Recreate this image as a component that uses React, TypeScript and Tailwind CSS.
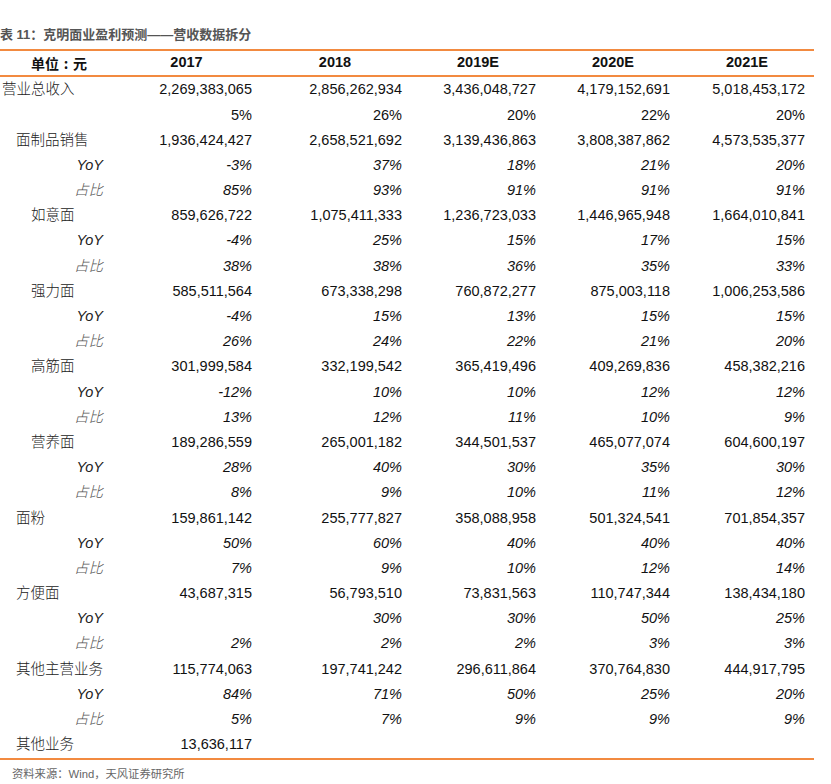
import React from "react";

type Row = { label: string; level: 0 | 1 | 2 | "yoy" | "zb" | "blank"; vals: string[] };

const rows: Row[] = [
  { label: "营业总收入", level: 0, vals: ["2,269,383,065", "2,856,262,934", "3,436,048,727", "4,179,152,691", "5,018,453,172"] },
  { label: "", level: "blank", vals: ["5%", "26%", "20%", "22%", "20%"] },
  { label: "面制品销售", level: 1, vals: ["1,936,424,427", "2,658,521,692", "3,139,436,863", "3,808,387,862", "4,573,535,377"] },
  { label: "YoY", level: "yoy", vals: ["-3%", "37%", "18%", "21%", "20%"] },
  { label: "占比", level: "zb", vals: ["85%", "93%", "91%", "91%", "91%"] },
  { label: "如意面", level: 2, vals: ["859,626,722", "1,075,411,333", "1,236,723,033", "1,446,965,948", "1,664,010,841"] },
  { label: "YoY", level: "yoy", vals: ["-4%", "25%", "15%", "17%", "15%"] },
  { label: "占比", level: "zb", vals: ["38%", "38%", "36%", "35%", "33%"] },
  { label: "强力面", level: 2, vals: ["585,511,564", "673,338,298", "760,872,277", "875,003,118", "1,006,253,586"] },
  { label: "YoY", level: "yoy", vals: ["-4%", "15%", "13%", "15%", "15%"] },
  { label: "占比", level: "zb", vals: ["26%", "24%", "22%", "21%", "20%"] },
  { label: "高筋面", level: 2, vals: ["301,999,584", "332,199,542", "365,419,496", "409,269,836", "458,382,216"] },
  { label: "YoY", level: "yoy", vals: ["-12%", "10%", "10%", "12%", "12%"] },
  { label: "占比", level: "zb", vals: ["13%", "12%", "11%", "10%", "9%"] },
  { label: "营养面", level: 2, vals: ["189,286,559", "265,001,182", "344,501,537", "465,077,074", "604,600,197"] },
  { label: "YoY", level: "yoy", vals: ["28%", "40%", "30%", "35%", "30%"] },
  { label: "占比", level: "zb", vals: ["8%", "9%", "10%", "11%", "12%"] },
  { label: "面粉", level: 1, vals: ["159,861,142", "255,777,827", "358,088,958", "501,324,541", "701,854,357"] },
  { label: "YoY", level: "yoy", vals: ["50%", "60%", "40%", "40%", "40%"] },
  { label: "占比", level: "zb", vals: ["7%", "9%", "10%", "12%", "14%"] },
  { label: "方便面", level: 1, vals: ["43,687,315", "56,793,510", "73,831,563", "110,747,344", "138,434,180"] },
  { label: "YoY", level: "yoy", vals: ["", "30%", "30%", "50%", "25%"] },
  { label: "占比", level: "zb", vals: ["2%", "2%", "2%", "3%", "3%"] },
  { label: "其他主营业务", level: 1, vals: ["115,774,063", "197,741,242", "296,611,864", "370,764,830", "444,917,795"] },
  { label: "YoY", level: "yoy", vals: ["84%", "71%", "50%", "25%", "20%"] },
  { label: "占比", level: "zb", vals: ["5%", "7%", "9%", "9%", "9%"] },
  { label: "其他业务", level: 1, vals: ["13,636,117", "", "", "", ""] },
];

const cols = "grid grid-cols-[113px_147px_150px_136px_134px_134px]";
const padR = ["pr-[8px]", "pr-[8px]", "pr-[10px]", "pr-[10px]", "pr-[9px]"];

function Label({ r }: { r: Row }) {
  if (r.level === "yoy")
    return <div className="text-right pr-[10px] italic text-[#222]">{r.label}</div>;
  if (r.level === "zb")
    return <div className="text-right pr-[10px] italic font-light text-[#555]">{r.label}</div>;
  if (r.level === "blank") return <div />;
  const pl = r.level === 0 ? "pl-[2px]" : r.level === 1 ? "pl-[16px]" : "pl-[31px]";
  return <div className={`${pl} font-light text-[#222] whitespace-nowrap`}>{r.label}</div>;
}

export default function App() {
  const italic = (r: Row) => r.level === "yoy" || r.level === "zb";
  return (
    <div
      className="w-[831px] h-[784px] bg-white text-[#111]"
      style={{ fontFamily: '"Liberation Sans", Arial, "Noto Sans CJK SC", sans-serif' }}
    >
      <div className="pt-[27px] h-[49px] pl-0 text-[13px] font-bold text-[#555] leading-[16px] whitespace-nowrap">
        表 11：克明面业盈利预测——营收数据拆分
      </div>
      <div className="w-[814px]">
        <div className={`${cols} h-[28px] border-y-2 border-[#f28a40] items-center text-[14.5px] font-bold text-[#111]`}>
          <div
            className="flex items-center pl-[31px] pt-[1px] whitespace-nowrap text-[14px] font-semibold"
            style={{ fontFamily: '"Noto Sans CJK SC", sans-serif' }}
          >
            <span>单位</span>
            <span className="inline-block w-[14px] text-center">:</span>
            <span>元</span>
          </div>
          <div className="text-center">2017</div>
          <div className="text-center">2018</div>
          <div className="text-center">2019E</div>
          <div className="text-center">2020E</div>
          <div className="text-center">2021E</div>
        </div>
        <div className="border-b-2 border-[#f28a40] pb-[1px]">
          {rows.map((r, i) => (
            <div key={i} className={`${cols} h-[25.2px] items-center text-[14.5px] leading-none`}>
              <Label r={r} />
              {r.vals.map((v, j) => (
                <div key={j} className={`text-right ${padR[j]} ${italic(r) ? "italic" : ""} text-[#111]`}>
                  {v}
                </div>
              ))}
            </div>
          ))}
        </div>
      </div>
      <div className="pl-[12px] pt-[6px] text-[11.3px] text-[#666] leading-[16px] whitespace-nowrap">
        资料来源：Wind，天风证券研究所
      </div>
    </div>
  );
}
